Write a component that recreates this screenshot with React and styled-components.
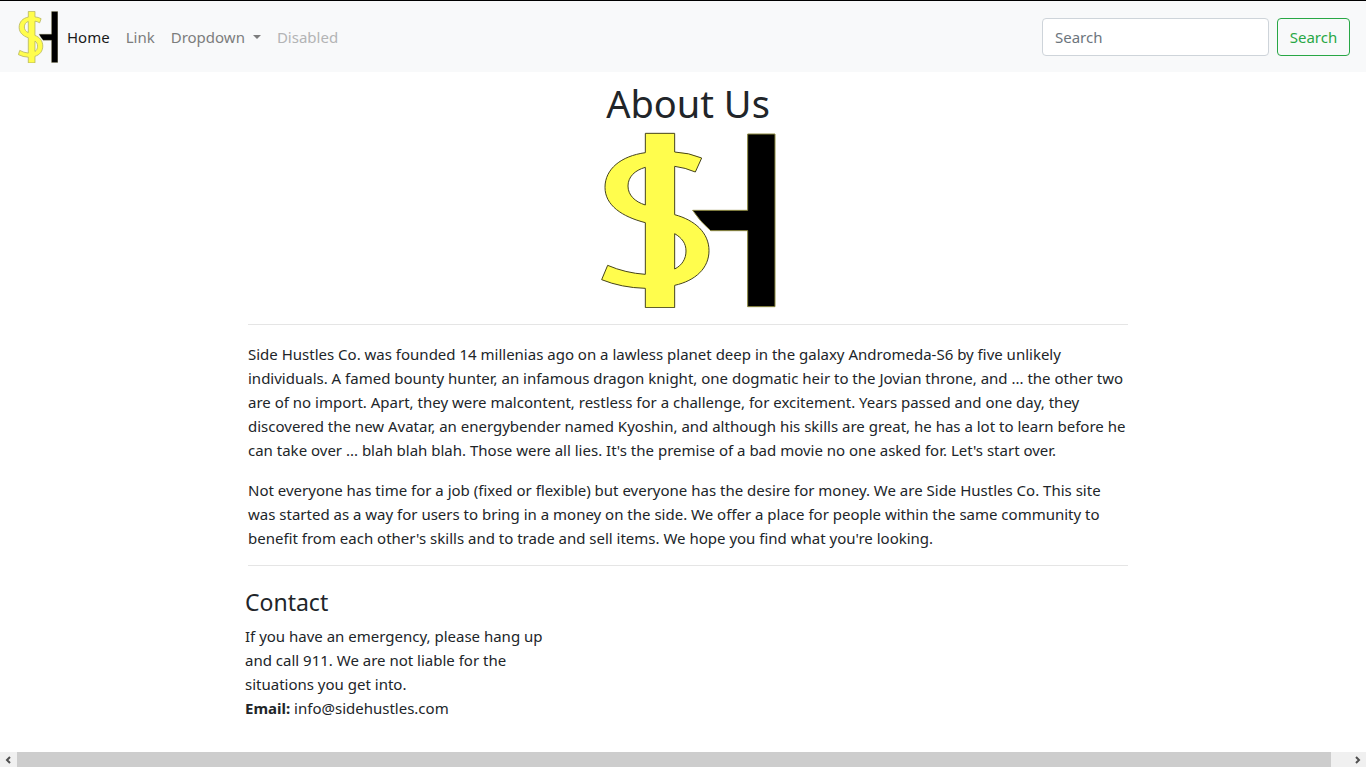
import React from "react";
import styled, { createGlobalStyle } from "styled-components";

const GlobalStyle = createGlobalStyle`
  *, *::before, *::after { box-sizing: border-box; }
  body {
    margin: 0;
    background: #fff;
    color: #212529;
    font-family: "Noto Sans", "Open Sans", sans-serif;
    font-size: 15px;
    line-height: 24px;
  }
`;

const Page = styled.div`
  min-height: 100vh;
  display: flex;
  flex-direction: column;
  border-top: 1px solid #000;
`;

const Navbar = styled.nav`
  display: flex;
  align-items: center;
  padding: 8px 16px 8px 18px;
  min-height: 71px;
  background: #f8f9fa;
`;

const Brand = styled.a`
  display: flex;
  margin-right: 1px;
`;

const NavList = styled.ul`
  display: flex;
  margin: 0;
  padding: 0;
  list-style: none;
`;

const NavLink = styled.a`
  display: flex;
  align-items: center;
  padding: 8px;
  text-decoration: none;
  color: ${(p) => (p.$active ? "#191919" : p.$disabled ? "#b3b4b5" : "#7c7d7d")};
`;

const Caret = styled.span`
  margin-left: 8px;
  border-top: 4px solid currentColor;
  border-left: 4px solid transparent;
  border-right: 4px solid transparent;
`;

const SearchForm = styled.form`
  display: flex;
  gap: 8px;
  margin-left: auto;
`;

const SearchInput = styled.input`
  width: 227px;
  height: 38px;
  padding: 6px 12px;
  border: 1px solid #ced4da;
  border-radius: 4px;
  background: #fff;
  color: #495057;
  font: inherit;
  &::placeholder { color: #6c757d; opacity: 1; }
`;

const SearchButton = styled.button`
  min-width: 73px;
  height: 38px;
  padding: 0;
  border: 1px solid #28a745;
  border-radius: 4px;
  background: transparent;
  color: #28a745;
  font: inherit;
`;

const Main = styled.main`
  display: flex;
  flex-direction: column;
  align-items: center;
  padding: 8px 0 16px 10px;
`;

const Title = styled.h1`
  margin: 0 0 6px;
  font-size: 38px;
  line-height: 46px;
  font-weight: 400;
`;

const Story = styled.section`
  width: 100%;
  max-width: 880px;
  margin-top: 16px;
  padding: 17px 0 15px;
  border: solid #e5e5e5;
  border-width: 1px 0;
`;

const Paragraph = styled.p`
  margin: 0;
  & + & { margin-top: 16px; }
`;

const ContactRow = styled.section`
  width: 100%;
  max-width: 886px;
  margin-top: 22px;
`;

const ContactTitle = styled.h2`
  margin: 0 0 8px;
  font-size: 23px;
  line-height: 28px;
  font-weight: 400;
`;

const Address = styled.address`
  max-width: 304px;
  font-style: normal;
`;

const ScrollBar = styled.div`
  display: flex;
  height: 15px;
  margin: auto 0 1px;
  background: #f0f0f0;
`;

const ScrollArrow = styled.button`
  display: flex;
  align-items: center;
  justify-content: center;
  width: 17px;
  padding: 0;
  border: 0;
  background: transparent;
`;

const ScrollThumb = styled.div`
  flex: 1;
  margin-right: 18px;
  background: #cdcdcd;
`;

function Logo({ width, height, ink, weight }) {
  const line = { stroke: ink, strokeWidth: weight };
  return (
    <svg
      width={width}
      height={height}
      viewBox="30 168 528 528"
      preserveAspectRatio="none"
      role="img"
      aria-label="Side Hustles"
    >
      <path
        fill="#fffd4d"
        fillRule="evenodd"
        {...line}
        d="M166 172H254V228Q297 230 335 246L316 288Q286 275 254 271V416C314 432 357 470 357 524C357 576 317 614 254 628V695H166V637Q94 635 35 611L53 568Q106 591 166 595V440C96 422 45 388 45 334C45 279 93 240 166 230ZM166 274C134 283 114 303 114 330C114 357 134 377 166 387ZM254 473C276 486 288 502 288 525C288 549 276 568 254 579Z"
      />
      <path
        fill="#000"
        stroke="#8c8940"
        strokeWidth="3"
        d="M473 174H555V692H473V464H362Q331 438 308 403H473Z"
      />
    </svg>
  );
}

function Chevron({ d }) {
  return (
    <svg width="8" height="8" viewBox="0 0 8 8" fill="none" stroke="#505050" strokeWidth="2" aria-hidden="true">
      <path d={d} />
    </svg>
  );
}

export default function App() {
  return (
    <>
      <GlobalStyle />
      <Page>
        <Navbar>
          <Brand href="#">
            <Logo width={40} height={52} ink="#b5b35c" weight={9} />
          </Brand>
          <NavList>
            <li><NavLink href="#" $active>Home</NavLink></li>
            <li><NavLink href="#">Link</NavLink></li>
            <li><NavLink href="#" aria-haspopup="true">Dropdown<Caret /></NavLink></li>
            <li><NavLink href="#" $disabled aria-disabled="true">Disabled</NavLink></li>
          </NavList>
          <SearchForm role="search" onSubmit={(e) => e.preventDefault()}>
            <SearchInput type="search" placeholder="Search" aria-label="Search" />
            <SearchButton type="submit">Search</SearchButton>
          </SearchForm>
        </Navbar>
        <Main>
          <Title>About Us</Title>
          <Logo width={176} height={176} ink="#45431c" weight={3} />
          <Story>
            <Paragraph>
              Side Hustles Co. was founded 14 millenias ago on a lawless planet deep in the galaxy Andromeda-S6 by five unlikely
              individuals. A famed bounty hunter, an infamous dragon knight, one dogmatic heir to the Jovian throne, and ... the other two
              are of no import. Apart, they were malcontent, restless for a challenge, for excitement. Years passed and one day, they
              discovered the new Avatar, an energybender named Kyoshin, and although his skills are great, he has a lot to learn before he
              can take over ... blah blah blah. Those were all lies. It's the premise of a bad movie no one asked for. Let's start over.
            </Paragraph>
            <Paragraph>
              Not everyone has time for a job (fixed or flexible) but everyone has the desire for money. We are Side Hustles Co. This site
              was started as a way for users to bring in a money on the side. We offer a place for people within the same community to
              benefit from each other's skills and to trade and sell items. We hope you find what you're looking.
            </Paragraph>
          </Story>
          <ContactRow>
            <ContactTitle>Contact</ContactTitle>
            <Address>
              If you have an emergency, please hang up and call 911. We are not liable for the situations you get into.
              <br />
              <strong>Email:</strong> info@sidehustles.com
            </Address>
          </ContactRow>
        </Main>
        <ScrollBar>
          <ScrollArrow type="button" aria-label="Scroll left"><Chevron d="M5 1L2 4L5 7" /></ScrollArrow>
          <ScrollThumb />
          <ScrollArrow type="button" aria-label="Scroll right"><Chevron d="M2 1L5 4L2 7" /></ScrollArrow>
        </ScrollBar>
      </Page>
    </>
  );
}
